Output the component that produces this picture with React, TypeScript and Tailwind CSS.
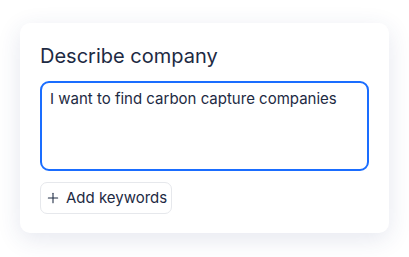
import { Plus } from 'lucide-react'

export default function App() {
  return (
    <div className="w-[409px] h-[257px] bg-white pt-[23px] pl-[20px] font-['Inter',sans-serif]">
      <div className="w-[369px] h-[210px] bg-white rounded-[10px] shadow-[0_6px_24px_rgba(40,60,120,0.12)] px-[20px] pt-[19px]">
        <h2 className="text-[20px] leading-7 text-[#1d2a43] mb-[11px]">Describe company</h2>
        <textarea
          readOnly
          defaultValue="I want to find carbon capture companies"
          className="block w-[329px] h-[90px] resize-none border-2 border-[#1a6dff] rounded-[9px] pl-[8px] pt-[4px] text-[15px] leading-6 text-[#1d2a43] outline-none"
        />
        <button className="mt-[11px] flex items-center gap-[5px] h-[32px] pl-[4px] pr-[4px] border border-[#e6e8ec] rounded-[7px] text-[15px] text-[#1d2a43]">
          <Plus size={16} strokeWidth={1.6} />
          <span>Add keywords</span>
        </button>
      </div>
    </div>
  )
}
